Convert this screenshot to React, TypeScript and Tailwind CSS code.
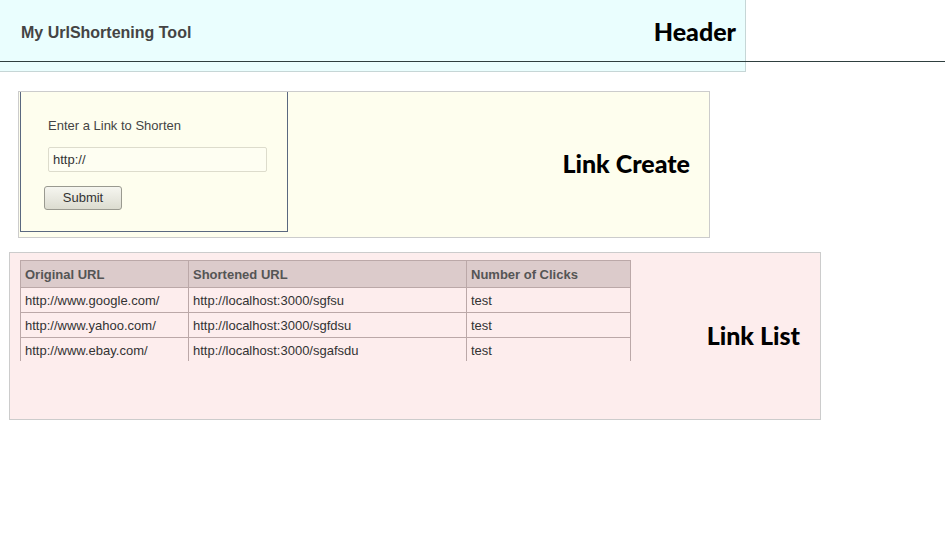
export default function App() {
  const rows = [
    ['http://www.google.com/', 'http://localhost:3000/sgfsu', 'test'],
    ['http://www.yahoo.com/', 'http://localhost:3000/sgfdsu', 'test'],
    ['http://www.ebay.com/', 'http://localhost:3000/sgafsdu', 'test'],
  ];

  return (
    <div className="min-h-screen bg-white font-['Liberation_Sans',Arial,sans-serif]">
      {/* header */}
      <div className="border-b border-[#2f3f3f]">
        <div className="w-[746px] h-[61px] bg-[#eafefe] border-r border-[#c6d6d6] flex items-center justify-between pl-[21px] pr-[9px]">
          <div className="text-[16px] font-bold text-[#444] pt-[4px]">My UrlShortening Tool</div>
          <div className="text-[25px] font-black text-black font-['Lato',sans-serif] pt-[3px]">Header</div>
        </div>
      </div>
      <div className="w-[746px] h-[10px] bg-[#eafefe] border-r border-b border-[#c6d6d6]" />

      {/* link create */}
      <div className="ml-[18px] mt-[19px] w-[692px] h-[147px] bg-[#fefeee] border border-[#cccccc] flex items-stretch justify-between">
        <div className="ml-[1px] w-[268px] h-[140px] border-l border-r border-b border-[#5a6880] pl-[27px] pt-[26px]">
          <div className="text-[13px] text-[#444] leading-[15px]">Enter a Link to Shorten</div>
          <input
            defaultValue="http://"
            className="mt-[14px] w-[219px] h-[25px] border border-[#dddccc] rounded-[2px] bg-[#fefef2] px-[4px] text-[13px] text-[#333] outline-none"
          />
          <button
            type="button"
            className="block mt-[14px] -ml-[4px] w-[78px] h-[24px] border border-[#9a9a90] rounded-[3px] bg-gradient-to-b from-[#f6f6f0] to-[#dcdcd0] text-[13px] text-[#333]"
          >
            Submit
          </button>
        </div>
        <div className="self-center pr-[19px] text-[25px] font-black text-black font-['Lato',sans-serif] pb-[2px]">Link Create</div>
      </div>

      {/* link list */}
      <div className="ml-[9px] mt-[14px] w-[812px] h-[168px] bg-[#fdeded] border border-[#cccccc] flex justify-between pl-[10px]">
        <div className="mt-[7px] grid grid-cols-[168px_278px_165px] self-start text-[13px] text-[#333]">
          {['Original URL', 'Shortened URL', 'Number of Clicks'].map((h, i) => (
            <div
              key={h}
              className={
                i === 2
                  ? 'h-[27px] border-t border-l border-r border-[#bba8a8] bg-[#dccbcb] px-[4px] pt-[2px] flex items-center text-[13px] font-bold text-[#555]'
                  : 'h-[27px] border-t border-l border-[#bba8a8] bg-[#dccbcb] px-[4px] pt-[2px] flex items-center text-[13px] font-bold text-[#555]'
              }
            >
              {h}
            </div>
          ))}
          {rows.map((r, ri) =>
            r.map((c, ci) => (
              <div
                key={ri + '-' + ci}
                className={
                  (ri === 2 ? 'h-[24px] pt-[3px] ' : 'h-[25px] pt-[1px] ') +
                  (ci === 2 ? 'border-r ' : '') +
                  'border-t border-l border-[#bba8a8] px-[4px] flex items-center'
                }
              >
                {c}
              </div>
            ))
          )}
        </div>
        <div className="self-center pr-[20px] text-[25px] font-black text-black font-['Lato',sans-serif]">Link List</div>
      </div>
    </div>
  );
}
